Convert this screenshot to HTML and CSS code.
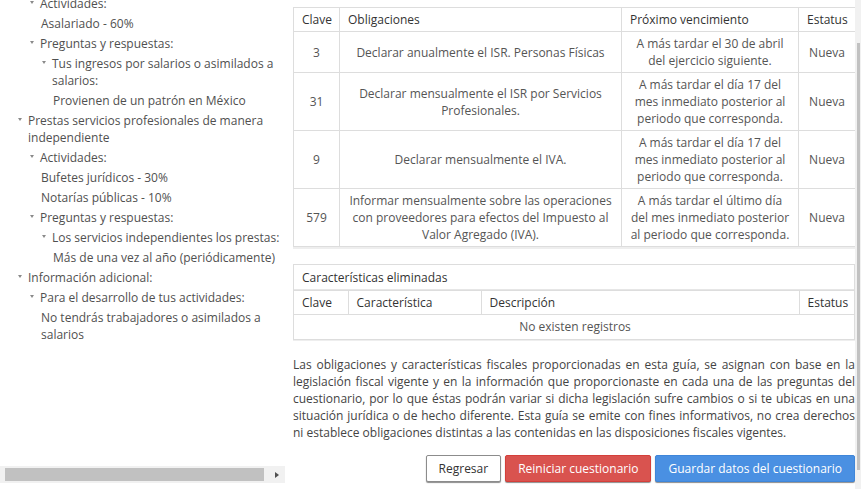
FILE: index.html
```html
<!DOCTYPE html>
<html lang="es">
<head>
<meta charset="utf-8">
<title>Guía de obligaciones</title>
<link rel="stylesheet" href="styles.css">
</head>
<body>
<div class="page">
  <aside class="side">
    <div class="tree-view">
      <ul class="tree">
        <li>
          <ul class="sub">
            <li><div class="row"><span class="caret"></span><span class="label">Actividades:</span></div>
              <ul class="sub">
                <li><div class="row"><span class="label">Asalariado - 60%</span></div></li>
              </ul>
            </li>
            <li><div class="row"><span class="caret"></span><span class="label">Preguntas y respuestas:</span></div>
              <ul class="sub">
                <li><div class="row"><span class="caret"></span><span class="label">Tus ingresos por salarios o asimilados a salarios:</span></div>
                  <ul class="sub">
                    <li><div class="row"><span class="label">Provienen de un patrón en México</span></div></li>
                  </ul>
                </li>
              </ul>
            </li>
          </ul>
        </li>
        <li><div class="row"><span class="caret"></span><span class="label">Prestas servicios profesionales de manera independiente</span></div>
          <ul class="sub">
            <li><div class="row"><span class="caret"></span><span class="label">Actividades:</span></div>
              <ul class="sub">
                <li><div class="row"><span class="label">Bufetes jurídicos - 30%</span></div></li>
                <li><div class="row"><span class="label">Notarías públicas - 10%</span></div></li>
              </ul>
            </li>
            <li><div class="row"><span class="caret"></span><span class="label">Preguntas y respuestas:</span></div>
              <ul class="sub">
                <li><div class="row"><span class="caret"></span><span class="label">Los servicios independientes los prestas:</span></div>
                  <ul class="sub">
                    <li><div class="row"><span class="label">Más de una vez al año (periódicamente)</span></div></li>
                  </ul>
                </li>
              </ul>
            </li>
          </ul>
        </li>
        <li><div class="row"><span class="caret"></span><span class="label">Información adicional:</span></div>
          <ul class="sub">
            <li><div class="row"><span class="caret"></span><span class="label">Para el desarrollo de tus actividades:</span></div>
              <ul class="sub">
                <li><div class="row"><span class="label">No tendrás trabajadores o asimilados a salarios</span></div></li>
              </ul>
            </li>
          </ul>
        </li>
      </ul>
    </div>
    <div class="hscroll"><div class="hthumb"></div><span class="harrow"></span></div>
  </aside>

  <main class="content">
    <table class="grid obligations">
      <colgroup>
        <col class="w-clave"><col class="w-obl"><col class="w-venc"><col class="w-est">
      </colgroup>
      <thead>
        <tr><th>Clave</th><th>Obligaciones</th><th>Próximo vencimiento</th><th>Estatus</th></tr>
      </thead>
      <tbody>
        <tr><td>3</td><td>Declarar anualmente el ISR. Personas Físicas</td><td>A más tardar el 30 de abril del ejercicio siguiente.</td><td>Nueva</td></tr>
        <tr><td>31</td><td>Declarar mensualmente el ISR por Servicios Profesionales.</td><td>A más tardar el día 17 del mes inmediato posterior al periodo que corresponda.</td><td>Nueva</td></tr>
        <tr><td>9</td><td>Declarar mensualmente el IVA.</td><td>A más tardar el día 17 del mes inmediato posterior al periodo que corresponda.</td><td>Nueva</td></tr>
        <tr><td>579</td><td>Informar mensualmente sobre las operaciones con proveedores para efectos del Impuesto al Valor Agregado (IVA).</td><td>A más tardar el último día del mes inmediato posterior al periodo que corresponda.</td><td>Nueva</td></tr>
      </tbody>
    </table>

    <section class="removed">
      <div class="removed-title">Características eliminadas</div>
      <table class="grid small">
        <colgroup>
          <col class="w2-clave"><col class="w2-car"><col class="w2-desc"><col class="w2-est">
        </colgroup>
        <thead>
          <tr><th>Clave</th><th>Característica</th><th>Descripción</th><th>Estatus</th></tr>
        </thead>
        <tbody>
          <tr><td colspan="4">No existen registros</td></tr>
        </tbody>
      </table>
    </section>

    <p class="note">Las obligaciones y características fiscales proporcionadas en esta guía, se asignan con base en la legislación fiscal vigente y en la información que proporcionaste en cada una de las preguntas del cuestionario, por lo que éstas podrán variar si dicha legislación sufre cambios o si te ubicas en una situación jurídica o de hecho diferente. Esta guía se emite con fines informativos, no crea derechos ni establece obligaciones distintas a las contenidas en las disposiciones fiscales vigentes.</p>

    <div class="actions">
      <button class="btn btn-default" type="button">Regresar</button>
      <button class="btn btn-danger" type="button">Reiniciar cuestionario</button>
      <button class="btn btn-primary" type="button">Guardar datos del cuestionario</button>
    </div>
  </main>

  <div class="vscroll"><div class="vthumb"></div></div>
</div>
</body>
</html>
```

FILE: styles.css
```css
* { box-sizing: border-box; }

html, body {
  margin: 0;
  padding: 0;
  background: #fff;
}

body {
  font-family: "Open Sans", "Liberation Sans", Arial, sans-serif;
  font-size: 12px;
  line-height: 17px;
  color: #444;
  overflow: hidden;
}

.page {
  display: flex;
  width: 861px;
  height: 489px;
}

/* ---------- left tree ---------- */
.side {
  width: 285px;
  flex: none;
  display: flex;
  flex-direction: column;
}

.tree-view {
  height: 466px;
  overflow: hidden;
  padding: 0 4px 0 17px;
}

.tree, .sub {
  list-style: none;
  margin: 0;
  padding: 0;
}

.tree {
  margin-top: -8px;
}

.sub {
  padding-left: 12px;
}

.tree li {
  margin: 0;
}

.row {
  display: flex;
  padding-top: 3px;
  color: #505050;
}

.caret {
  flex: none;
  width: 11px;
  height: 17px;
}

.caret::before {
  content: "";
  display: block;
  margin: 6px 0 0 1px;
  width: 0;
  height: 0;
  border-top: 3px solid #8a8a8a;
  border-left: 2.5px solid transparent;
  border-right: 2.5px solid transparent;
}

.label {
  flex: 1;
  min-width: 0;
}

.hscroll {
  height: 17px;
  background: #f1f1f1;
  display: flex;
  align-items: center;
  padding: 0 6px 0 5px;
}

.hthumb {
  width: 259px;
  height: 13px;
  background: #c1c1c1;
}

.harrow {
  margin-left: 11px;
  width: 0;
  height: 0;
  border-left: 4px solid #505050;
  border-top: 3.5px solid transparent;
  border-bottom: 3.5px solid transparent;
}

/* ---------- right content ---------- */
.content {
  width: 562px;
  flex: none;
  margin-left: 8px;
  padding-top: 7px;
}

.grid {
  width: 100%;
  border-collapse: collapse;
  table-layout: fixed;
  border: 1px solid #dddddd;
}

.grid th, .grid td {
  border: 1px solid #dddddd;
  padding: 3px 8px;
  line-height: 17px;
  vertical-align: middle;
}

.grid th {
  font-weight: normal;
  text-align: left;
  color: #333;
}

.grid td {
  text-align: center;
  color: #555;
}

.obligations {
  box-shadow: 0 2px 0 #eeeeee;
}

.w-clave { width: 46px; }
.w-obl { width: 282px; }
.w-venc { width: 177px; }
.w-est { width: 57px; }

.removed {
  margin-top: 17px;
  border: 1px solid #dddddd;
  box-shadow: 0 1px 0 #eeeeee;
}

.removed-title {
  padding: 4px 8px 3px;
  color: #333;
  border-bottom: 1px solid #e6e6e6;
}

.small {
  border: none;
}

.small th, .small td {
  padding: 3px 8px;
}

.small tr:first-child th { border-top: 1px solid #dddddd; }
.small th:first-child, .small td:first-child { border-left: none; }
.small th:last-child, .small td:last-child { border-right: none; }
.small tbody tr:last-child td { border-bottom: none; }

.small td {
  padding: 3px 8px 4px;
}

.w2-clave { width: 54px; }
.w2-car { width: 133px; }
.w2-desc { width: 318px; }
.w2-est { width: 57px; }

.note {
  margin: 16px 0 0;
  text-align: justify;
  color: #444;
}

.actions {
  display: flex;
  justify-content: flex-end;
  gap: 4px;
  margin-top: 14px;
}

.btn {
  font-family: inherit;
  font-size: 12px;
  line-height: 17px;
  height: 27px;
  padding: 4px 12px;
  border-radius: 2px;
  border: 1px solid transparent;
  box-shadow: 0 1px 1px rgba(0, 0, 0, 0.45);
  cursor: pointer;
}

.btn-default {
  background: #fff;
  border-color: #8c8c8c;
  color: #333;
}

.btn-danger {
  background: #d9534f;
  border-color: #d43f3a;
  color: #fff;
}

.btn-primary {
  background: #4a90e2;
  border-color: #3f86d9;
  color: #fff;
}

/* ---------- page scrollbar ---------- */
.vscroll {
  width: 6px;
  flex: none;
  background: #f1f1f1;
  padding: 43px 1px 19px 2px;
}

.vthumb {
  height: 100%;
  background: #c1c1c1;
}
```
